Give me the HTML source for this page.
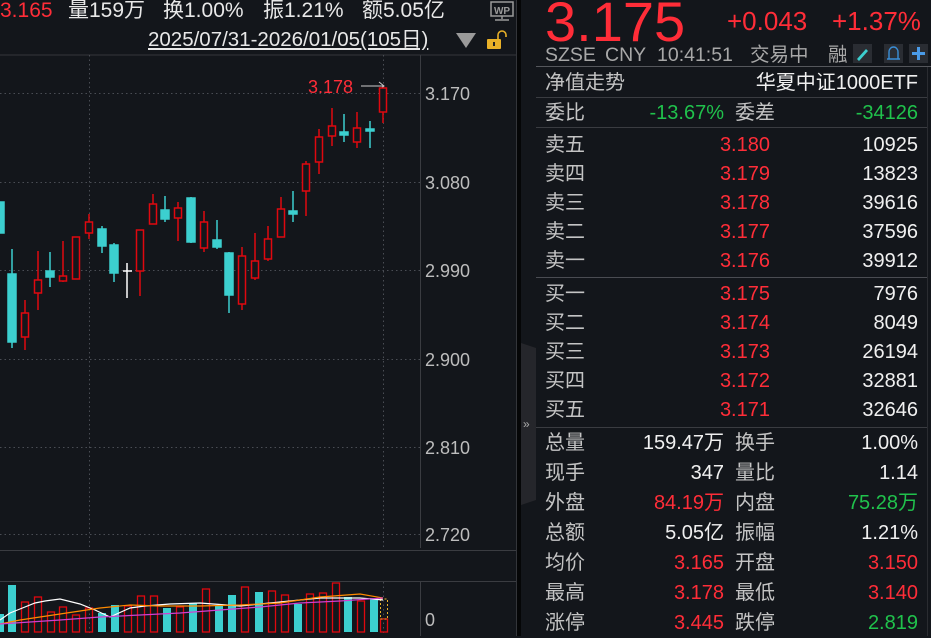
<!DOCTYPE html>
<html><head><meta charset="utf-8"><style>
*{margin:0;padding:0;box-sizing:border-box}
body{width:931px;height:636px;background:#13161b;overflow:hidden;position:relative;font-family:"Liberation Sans","Noto Sans CJK SC",sans-serif;color:#e8e8e8}
.a{position:absolute;white-space:nowrap}
.r{color:#ff2d38}.g{color:#20c24c}.l{color:#c4c4c4}.w{color:#f0f0f0}
.row{position:absolute;left:545px;width:373px;height:29px;font-size:20px;line-height:29px}
.row span{position:absolute}
.h{position:absolute;top:-3px;font-size:21px;line-height:28px;white-space:nowrap}
</style></head><body>
<!-- top left header -->
<div class="h r" style="left:0">3.165</div>
<div class="h" style="left:68px">量159万</div>
<div class="h" style="left:163px">换1.00%</div>
<div class="h" style="left:263px">振1.21%</div>
<div class="h" style="left:362px">额5.05亿</div>
<div class="a" style="left:148px;top:28px;font-size:20.5px;line-height:24px;text-decoration:underline">2025/07/31-2026/01/05(105日)</div>
<svg class="a" style="left:0;top:0" width="931" height="636">
<rect x="491" y="2" width="22" height="14" fill="none" stroke="#9a9a9a" stroke-width="1.5"/>
<text x="502" y="14" font-size="10" font-weight="bold" fill="#9a9a9a" text-anchor="middle" font-family="Liberation Sans">WP</text>
<line x1="502" y1="16" x2="502" y2="19" stroke="#9a9a9a" stroke-width="1.5"/><line x1="495" y1="20" x2="509" y2="20" stroke="#9a9a9a" stroke-width="1.5"/>
<polygon points="456,33 476,33 466,48" fill="#9a9a9a"/>
<rect x="487" y="39" width="14" height="10" rx="1" fill="#e9b128"/>
<rect x="493" y="42" width="2" height="4" fill="#222"/>
<path d="M498,39 V35 a4,4 0 0 1 8,0 v2" fill="none" stroke="#e9b128" stroke-width="1.6"/>
<line x1="0" y1="55" x2="517" y2="55" stroke="#34363b"/>
<line x1="420.5" y1="55" x2="420.5" y2="548" stroke="#3a3c41"/>
<line x1="0" y1="550.5" x2="517" y2="550.5" stroke="#3a3c41"/>
<line x1="0" y1="581.5" x2="517" y2="581.5" stroke="#3a3c41"/>
<line x1="420.5" y1="582" x2="420.5" y2="636" stroke="#3a3c41"/>
<rect x="517" y="0" width="4" height="636" fill="#050607"/>
<line x1="516.5" y1="0" x2="516.5" y2="636" stroke="#33353a"/>
<polygon points="521,343 536,348 536,500 521,505" fill="#25262b"/>
<text x="523" y="428" font-size="12" fill="#aaa">»</text>
<g stroke="#4a4d54" stroke-dasharray="1.5,3">
<line x1="0" y1="93.5" x2="420" y2="93.5"/><line x1="0" y1="182.5" x2="420" y2="182.5"/><line x1="0" y1="270.5" x2="420" y2="270.5"/><line x1="0" y1="359.5" x2="420" y2="359.5"/><line x1="0" y1="447.5" x2="420" y2="447.5"/><line x1="0" y1="534.5" x2="420" y2="534.5"/>
<line x1="89.5" y1="55" x2="89.5" y2="548"/><line x1="383.5" y1="55" x2="383.5" y2="548"/>
<line x1="89.5" y1="582" x2="89.5" y2="636"/><line x1="383.5" y1="582" x2="383.5" y2="636"/>
</g>
<g font-size="18" fill="#bdbdbd" font-family="Liberation Sans">
<text x="425" y="100">3.170</text><text x="425" y="189">3.080</text><text x="425" y="277">2.990</text><text x="425" y="366">2.900</text><text x="425" y="454">2.810</text><text x="425" y="541">2.720</text><text x="425" y="626">0</text>
</g>
<text x="308" y="93" font-size="18" fill="#ff2d38" font-family="Liberation Sans">3.178</text>
<path d="M361,86 H383 M379,82 L384,86 L379,90" stroke="#ccc" fill="none" stroke-width="1"/>
<g stroke-width="1.5">
<g fill="#3ccfcf" stroke="#3ccfcf">
<rect x="0" y="202" width="4" height="31"/>
<line x1="12" y1="249" x2="12" y2="348"/><rect x="8" y="274" width="8" height="68"/>
<line x1="50" y1="252" x2="50" y2="287"/><rect x="46" y="271" width="8" height="6"/>
<line x1="102" y1="226" x2="102" y2="253"/><rect x="98" y="229" width="8" height="17"/>
<line x1="114" y1="243" x2="114" y2="282"/><rect x="110" y="245" width="8" height="28"/>
<line x1="165" y1="196" x2="165" y2="222"/><rect x="161" y="210" width="8" height="9"/>
<line x1="191" y1="197" x2="191" y2="243"/><rect x="187" y="198" width="8" height="44"/>
<line x1="217" y1="220" x2="217" y2="249"/><rect x="213" y="240" width="8" height="7"/>
<line x1="229" y1="252" x2="229" y2="313"/><rect x="225" y="253" width="8" height="42"/>
<line x1="293" y1="191" x2="293" y2="222"/><rect x="289" y="211" width="8" height="3"/>
<line x1="344" y1="114" x2="344" y2="142"/><rect x="340" y="132" width="8" height="3"/>
<line x1="370" y1="121" x2="370" y2="148"/><rect x="366" y="129" width="8" height="2"/>
</g>
<line x1="127" y1="263" x2="127" y2="298" stroke="#fff"/><line x1="123" y1="271" x2="132" y2="271" stroke="#fff"/>
<g stroke="#e0080f" fill="#13161b">
<line x1="25" y1="300" x2="25" y2="350"/><rect x="21.5" y="313" width="7" height="24"/>
<line x1="38" y1="251" x2="38" y2="310"/><rect x="34.5" y="280" width="7" height="13"/>
<line x1="63" y1="241" x2="63" y2="282"/><rect x="59.5" y="276" width="7" height="5"/>
<rect x="72.5" y="237" width="7" height="42"/>
<line x1="89" y1="214" x2="89" y2="239"/><rect x="85.5" y="222" width="7" height="11"/>
<line x1="140" y1="230" x2="140" y2="296"/><rect x="136.5" y="230" width="7" height="41"/>
<line x1="153" y1="194" x2="153" y2="224"/><rect x="149.5" y="204" width="7" height="20"/>
<line x1="178" y1="202" x2="178" y2="241"/><rect x="174.5" y="208" width="7" height="10"/>
<line x1="204" y1="211" x2="204" y2="252"/><rect x="200.5" y="222" width="7" height="26"/>
<line x1="242" y1="247" x2="242" y2="310"/><rect x="238.5" y="256" width="7" height="48"/>
<line x1="255" y1="233" x2="255" y2="280"/><rect x="251.5" y="261" width="7" height="17"/>
<line x1="268" y1="226" x2="268" y2="261"/><rect x="264.5" y="239" width="7" height="20"/>
<line x1="281" y1="197" x2="281" y2="237"/><rect x="277.5" y="209" width="7" height="28"/>
<line x1="306" y1="161" x2="306" y2="216"/><rect x="302.5" y="164" width="7" height="27"/>
<line x1="319" y1="129" x2="319" y2="174"/><rect x="315.5" y="137" width="7" height="25"/>
<line x1="332" y1="108" x2="332" y2="146"/><rect x="328.5" y="126" width="7" height="10"/>
<line x1="357" y1="112" x2="357" y2="148"/><rect x="353.5" y="128" width="7" height="14"/>
<line x1="383" y1="88" x2="383" y2="123"/><rect x="379.5" y="88" width="7" height="24"/>
</g>
</g>
<g fill="#3ccfcf">
<rect x="0" y="614" width="4" height="18"/><rect x="8" y="585" width="8" height="47"/><rect x="98" y="613" width="8" height="19"/><rect x="111" y="605" width="8" height="27"/><rect x="163" y="608" width="8" height="24"/><rect x="189" y="603" width="8" height="29"/><rect x="215" y="605" width="8" height="27"/><rect x="228" y="595" width="8" height="37"/><rect x="255" y="592" width="8" height="40"/><rect x="294" y="604" width="8" height="28"/><rect x="344" y="597" width="8" height="35"/><rect x="370" y="598" width="8" height="34"/>
</g>
<g fill="none" stroke="#e0080f" stroke-width="1.3">
<rect x="21.5" y="602" width="7" height="30"/><rect x="34.5" y="597" width="7" height="35"/><rect x="47.5" y="612" width="7" height="20"/><rect x="59.5" y="607" width="7" height="25"/><rect x="72.5" y="615" width="7" height="17"/><rect x="85.5" y="608" width="7" height="24"/><rect x="124.5" y="606" width="7" height="26"/><rect x="137.5" y="596" width="7" height="36"/><rect x="150.5" y="596" width="7" height="36"/><rect x="176.5" y="607" width="7" height="25"/><rect x="202.5" y="589" width="7" height="43"/><rect x="241.5" y="587" width="7" height="45"/><rect x="268.5" y="591" width="7" height="41"/><rect x="281.5" y="595" width="7" height="37"/><rect x="306.5" y="594" width="7" height="38"/><rect x="319.5" y="593" width="7" height="39"/><rect x="332.5" y="583" width="7" height="49"/><rect x="357.5" y="601" width="7" height="31"/><rect x="380.5" y="619" width="7" height="13"/>
</g>
<rect x="380.5" y="599" width="7" height="20" fill="none" stroke="#e9b128" stroke-dasharray="2,2"/>
<polyline points="0,620 10,613 20,609 35,603 45,601 60,599 80,604 95,610 110,617 130,608 145,606 170,604 200,603 240,606 280,602 320,598 360,598 383,600" fill="none" stroke="#fff" stroke-width="1.2"/>
<polyline points="0,624 20,620 40,617 60,614 80,611 100,608 130,605 160,606 200,606 240,605 280,603 320,597 360,594 383,598" fill="none" stroke="#ff8a00" stroke-width="1.2"/>
<polyline points="0,624 30,622 60,620 100,617 140,615 180,613 220,610 260,607 300,603 340,601 383,598" fill="none" stroke="#d03fd0" stroke-width="1.2"/>
<line x1="536" y1="66.5" x2="931" y2="66.5" stroke="#55575c"/>
<line x1="536" y1="97.5" x2="927" y2="97.5" stroke="#3a3c41"/>
<line x1="536" y1="127.5" x2="927" y2="127.5" stroke="#3a3c41"/>
<line x1="536" y1="277.5" x2="927" y2="277.5" stroke="#4a4c52"/>
<line x1="536" y1="427.5" x2="927" y2="427.5" stroke="#3a3c41"/>
<line x1="927.5" y1="67" x2="927.5" y2="636" stroke="#2a2c31"/>
<rect x="853" y="44" width="19" height="19" fill="#2a2d33"/><path d="M857,59 L866,49 L868,51 L859,61 Z" fill="#3ccfcf"/>
<rect x="884" y="44" width="19" height="19" fill="#2a2d33"/><path d="M887,59 h13 M889,59 v-7 a4.5,5 0 0 1 9,0 v7" fill="none" stroke="#3a8fd8" stroke-width="1.4"/>
<rect x="909" y="44" width="19" height="19" fill="#2a2d33"/><path d="M918.5,47 v13 M912,53.5 h13" stroke="#4a9be8" stroke-width="3"/>
</svg>
<div class="a r" style="left:545px;top:-8px;font-size:56px;line-height:60px">3.175</div>
<div class="a r" style="left:727px;top:6px;font-size:26px;line-height:30px">+0.043</div>
<div class="a r" style="left:832px;top:6px;font-size:26px;line-height:30px">+1.37%</div>
<div class="a" style="left:545px;top:43px;font-size:19.5px;line-height:24px;color:#a8a8a8">SZSE</div>
<div class="a" style="left:605px;top:43px;font-size:19.5px;line-height:24px;color:#a8a8a8">CNY</div>
<div class="a" style="left:657px;top:43px;font-size:19.5px;line-height:24px;color:#a8a8a8">10:41:51</div>
<div class="a" style="left:750px;top:43px;font-size:19.5px;line-height:24px;color:#a8a8a8">交易中</div>
<div class="a" style="left:828px;top:43px;font-size:19.5px;line-height:24px;color:#a8a8a8">融</div>
<div class="row" style="top:69px"><span class="l" style="left:0">净值走势</span><span class="w" style="right:0">华夏中证1000ETF</span></div>
<div class="row" style="top:99px"><span class="l" style="left:0">委比</span><span class="g" style="right:194px">-13.67%</span><span class="l" style="left:190px">委差</span><span class="g" style="right:0">-34126</span></div>
<div class="row" style="top:131px"><span class="l">卖五</span><span class="r" style="right:148px">3.180</span><span class="w" style="right:0">10925</span></div>
<div class="row" style="top:160px"><span class="l">卖四</span><span class="r" style="right:148px">3.179</span><span class="w" style="right:0">13823</span></div>
<div class="row" style="top:189px"><span class="l">卖三</span><span class="r" style="right:148px">3.178</span><span class="w" style="right:0">39616</span></div>
<div class="row" style="top:218px"><span class="l">卖二</span><span class="r" style="right:148px">3.177</span><span class="w" style="right:0">37596</span></div>
<div class="row" style="top:247px"><span class="l">卖一</span><span class="r" style="right:148px">3.176</span><span class="w" style="right:0">39912</span></div>
<div class="row" style="top:280px"><span class="l">买一</span><span class="r" style="right:148px">3.175</span><span class="w" style="right:0">7976</span></div>
<div class="row" style="top:309px"><span class="l">买二</span><span class="r" style="right:148px">3.174</span><span class="w" style="right:0">8049</span></div>
<div class="row" style="top:338px"><span class="l">买三</span><span class="r" style="right:148px">3.173</span><span class="w" style="right:0">26194</span></div>
<div class="row" style="top:367px"><span class="l">买四</span><span class="r" style="right:148px">3.172</span><span class="w" style="right:0">32881</span></div>
<div class="row" style="top:396px"><span class="l">买五</span><span class="r" style="right:148px">3.171</span><span class="w" style="right:0">32646</span></div>
<div class="row" style="top:429px"><span class="l">总量</span><span class="w" style="right:194px">159.47万</span><span class="l" style="left:190px">换手</span><span class="w" style="right:0">1.00%</span></div>
<div class="row" style="top:459px"><span class="l">现手</span><span class="w" style="right:194px">347</span><span class="l" style="left:190px">量比</span><span class="w" style="right:0">1.14</span></div>
<div class="row" style="top:489px"><span class="l">外盘</span><span class="r" style="right:194px">84.19万</span><span class="l" style="left:190px">内盘</span><span class="g" style="right:0">75.28万</span></div>
<div class="row" style="top:519px"><span class="l">总额</span><span class="w" style="right:194px">5.05亿</span><span class="l" style="left:190px">振幅</span><span class="w" style="right:0">1.21%</span></div>
<div class="row" style="top:549px"><span class="l">均价</span><span class="r" style="right:194px">3.165</span><span class="l" style="left:190px">开盘</span><span class="r" style="right:0">3.150</span></div>
<div class="row" style="top:579px"><span class="l">最高</span><span class="r" style="right:194px">3.178</span><span class="l" style="left:190px">最低</span><span class="r" style="right:0">3.140</span></div>
<div class="row" style="top:609px"><span class="l">涨停</span><span class="r" style="right:194px">3.445</span><span class="l" style="left:190px">跌停</span><span class="g" style="right:0">2.819</span></div>
</body></html>
